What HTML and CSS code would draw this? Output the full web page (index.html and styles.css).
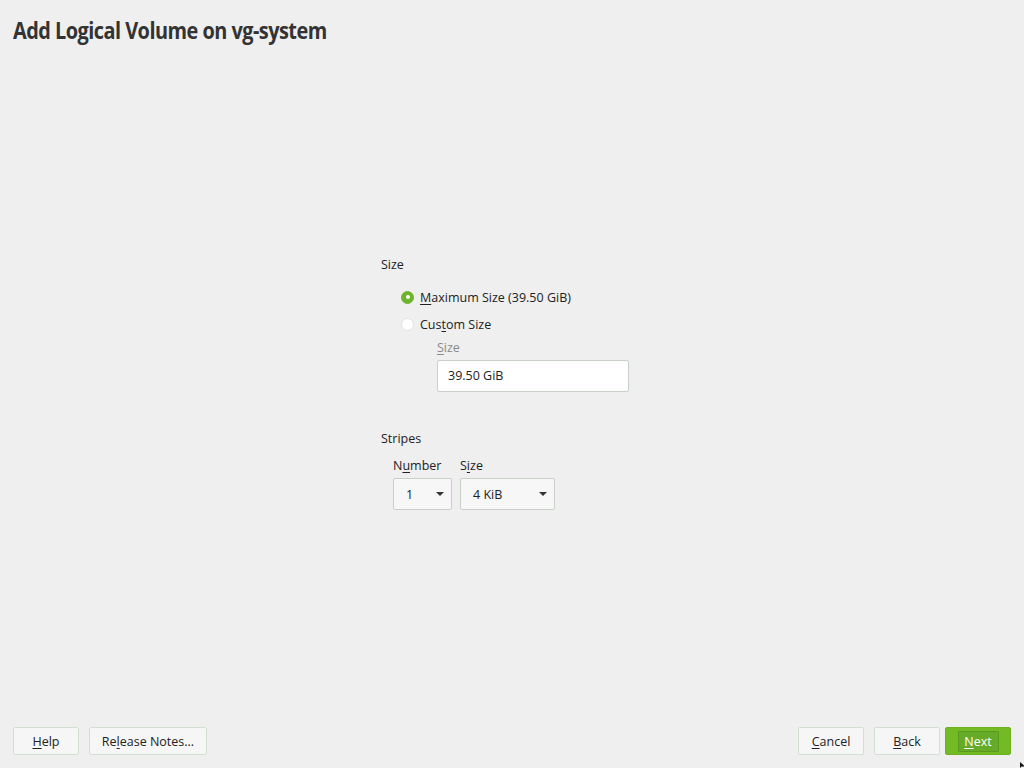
FILE: index.html
```html
<!DOCTYPE html>
<html>
<head>
<meta charset="utf-8">
<link rel="stylesheet" href="styles.css">
</head>
<body>
<div class="page">
  <header class="header"><h1 class="title">Add Logical Volume on vg-system</h1></header>
  <main class="main">
    <div class="form">
      <div class="group-label">Size</div>
      <div class="radios">
        <div class="radio-row"><span class="radio checked"></span><span><u>M</u>aximum Size (39.50 GiB)</span></div>
        <div class="radio-row"><span class="radio"></span><span>Cus<u>t</u>om Size</span></div>
        <div class="sub">
          <div class="sub-label"><u>S</u>ize</div>
          <div class="input">39.50 GiB</div>
        </div>
      </div>
      <div class="group-label stripes">Stripes</div>
      <div class="stripe-row">
        <div class="field">
          <div class="field-label">N<u>u</u>mber</div>
          <div class="combo combo-num"><span>1</span><span class="caret"></span></div>
        </div>
        <div class="field">
          <div class="field-label">S<u>i</u>ze</div>
          <div class="combo combo-size"><span>4 KiB</span><span class="caret"></span></div>
        </div>
      </div>
    </div>
  </main>
  <footer class="footer">
    <div class="btns">
      <div class="btn btn-help"><u>H</u>elp</div>
      <div class="btn btn-notes">Re<u>l</u>ease Notes...</div>
    </div>
    <div class="btns">
      <div class="btn btn-cancel"><u>C</u>ancel</div>
      <div class="btn btn-back"><u>B</u>ack</div>
      <div class="btn btn-next"><span class="focus"><u>N</u>ext</span></div>
    </div>
  </footer>
  <svg class="cursor" width="6" height="6" viewBox="0 0 6 6"><path d="M0 0 L0 6 L1.5 4.5 L5 4.5 Z" fill="#111"/></svg>
</div>
</body>
</html>
```
FILE: styles.css
```css
* { box-sizing: border-box; }
html, body { margin: 0; padding: 0; }
body {
  background: #efefef;
  font-family: "Open Sans", "Noto Sans", sans-serif;
  font-size: 12.5px;
  color: #222;
}
u { text-decoration-thickness: 1px; text-underline-offset: 2px; }
.page {
  position: relative;
  width: 1024px;
  height: 768px;
  display: flex;
  flex-direction: column;
  overflow: hidden;
}
.header { padding: 14px 0 0 13px; height: 60px; }
.title {
  margin: 0;
  font-size: 23px;
  font-weight: 700;
  color: #333;
  letter-spacing: -0.6px;
  transform: scaleX(0.865);
  transform-origin: left center;
  white-space: nowrap;
  line-height: 32px;
}
.main { flex: 1; display: flex; justify-content: center; }
.form { width: 262px; padding-top: 195px; }
.group-label { line-height: 20px; height: 20px; }
.radios { padding-left: 20px; padding-top: 13px; }
.radio-row { display: flex; align-items: center; height: 18px; margin-bottom: 9px; }
.radio {
  width: 13px; height: 13px; border-radius: 50%;
  background: #fff; border: 1px solid #dde3e8;
  margin-right: 6px; flex: none;
  display: flex; align-items: center; justify-content: center;
}
.radio.checked { background: #6eb52b; border-color: #6eb52b; }
.radio.checked::after { content: ""; width: 4px; height: 4px; border-radius: 50%; background: #fff; }
.sub { padding-left: 36px; margin-top: -3px; }
.sub-label { color: #8a8a8a; line-height: 18px; margin-bottom: 3px; }
.input {
  width: 192px; height: 32px;
  background: #fff; border: 1px solid #c8d0c8; border-radius: 2px;
  padding-left: 10px; line-height: 30px;
}
.stripes { margin-top: 37px; }
.stripe-row { display: flex; gap: 8px; padding-left: 12px; margin-top: 8px; }
.field-label { line-height: 18px; margin-bottom: 3px; }
.combo {
  height: 32px;
  background: #f7f7f7; border: 1px solid #c8d0c8; border-radius: 2px;
  display: flex; align-items: center; justify-content: space-between;
  padding: 0 7px 0 12px;
}
.combo-num { width: 59px; }
.combo-size { width: 95px; }
.caret {
  width: 0; height: 0;
  border-left: 4px solid transparent; border-right: 4px solid transparent;
  border-top: 4px solid #333;
}
.footer {
  height: 41px;
  display: flex; justify-content: space-between;
  padding: 0 13px 0 13px;
}
.btns { display: flex; gap: 10px; }
.btns + .btns { gap: 0; }
.btn {
  height: 28px; line-height: 27px;
  background: #f6f6f6; border: 1px solid #d3dfd3; border-radius: 2px;
  text-align: center; color: #222;
}
.btn-help { width: 66px; }
.btn-notes { width: 118px; }
.btn-cancel { width: 66px; margin-right: 10px; }
.btn-back { width: 66px; margin-right: 5px; }
.btn-next {
  width: 66px; background: #73ba25; border-color: #6db121; color: #fff;
  display: flex; align-items: center; justify-content: center;
}
.focus {
  display: block; height: 21px; line-height: 20px; width: 41px;
  border: 1px solid #5a9a1e; background: #66ab27; border-radius: 1px;
}
.cursor { position: absolute; left: 1020px; top: 762px; }
```
